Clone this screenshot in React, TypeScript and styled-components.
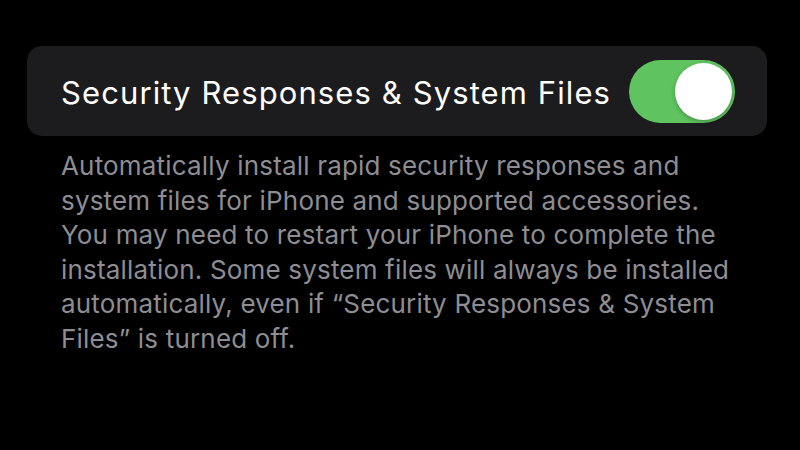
import styled, { createGlobalStyle } from "styled-components";

const GlobalStyle = createGlobalStyle`
  html, body {
    margin: 0;
    padding: 0;
    background: #000;
  }
  body {
    font-family: Inter, "Noto Sans", "Liberation Sans", sans-serif;
    -webkit-font-smoothing: antialiased;
  }
`;

const Page = styled.div`
  width: 800px;
  height: 450px;
  background: #000;
  padding: 46px 33px 0 27px;
  box-sizing: border-box;
`;

const Card = styled.div`
  height: 90px;
  background: #1c1c1e;
  border-radius: 15px;
  display: flex;
  align-items: center;
  justify-content: space-between;
  padding: 0 32px 0 34px;
`;

const Label = styled.span`
  color: #fff;
  font-size: 31px;
  letter-spacing: 1.1px;
  padding-top: 2px;
`;

const Toggle = styled.div<{ $on: boolean }>`
  width: 106px;
  height: 63px;
  border-radius: 32px;
  background: ${(p) => (p.$on ? "#5fc460" : "#39393d")};
  display: flex;
  align-items: center;
  justify-content: ${(p) => (p.$on ? "flex-end" : "flex-start")};
  padding: 0 3px;
  box-sizing: border-box;
`;

const Knob = styled.div`
  width: 57px;
  height: 57px;
  border-radius: 50%;
  background: #fff;
  box-shadow: 0 2px 5px rgba(0, 0, 0, 0.25);
`;

const Footer = styled.p`
  margin: 13px 0 0 34px;
  color: #8d8d93;
  font-size: 26px;
  line-height: 34.6px;
  letter-spacing: 0.18px;
`;

export default function App() {
  return (
    <Page>
      <GlobalStyle />
      <Card>
        <Label>Security Responses &amp; System Files</Label>
        <Toggle $on>
          <Knob />
        </Toggle>
      </Card>
      <Footer>
        Automatically install rapid security responses and
        <br />
        system files for iPhone and supported accessories.
        <br />
        You may need to restart your iPhone to complete the
        <br />
        installation. Some system files will always be installed
        <br />
        automatically, even if “Security Responses &amp; System
        <br />
        Files” is turned off.
      </Footer>
    </Page>
  );
}
